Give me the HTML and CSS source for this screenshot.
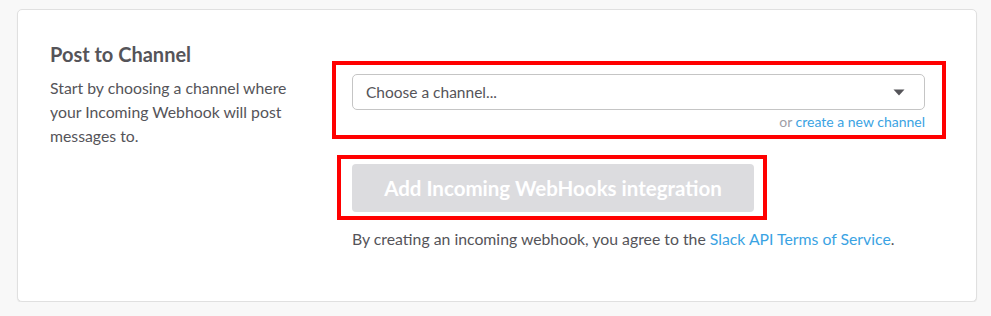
FILE: index.html
```html
<!DOCTYPE html>
<html lang="en">
<head>
  <meta charset="UTF-8" />
  <title>Incoming WebHooks</title>
  <link rel="stylesheet" href="styles.css">
</head>
<body>
  <div class="card">
    <div class="intro">
      <h2>Post to Channel</h2>
      <p>Start by choosing a channel where your Incoming Webhook will post messages to.</p>
    </div>

    <div class="settings">
      <div class="highlight channel-box">
        <div class="select">
          <span>Choose a channel...</span>
          <svg class="caret" width="12" height="7" viewBox="0 0 12 7"><path d="M0.5 0.5h11L6 6.5z" fill="#555459"/></svg>
        </div>
        <div class="new-channel">or <a href="#">create a new channel</a></div>
      </div>

      <div class="highlight button-box">
        <button type="button" class="add-btn" disabled>Add Incoming WebHooks integration</button>
      </div>

      <p class="terms">By creating an incoming webhook, you agree to the <a href="#">Slack API Terms of Service</a>.</p>
    </div>
  </div>
</body>
</html>
```

FILE: styles.css
```css
body {
  font-family: 'Lato', 'Liberation Sans', sans-serif;
  background-color: #f8f8f8;
  margin: 0;
  padding: 9px 14px 0 17px;
  color: #555459;
}
a {
  color: #3aa3e3;
  text-decoration: none;
}
.card {
  display: flex;
  gap: 32px;
  background-color: white;
  border: 1px solid #e0e0e0;
  border-radius: 5px;
  box-shadow: 0 1px 1px rgba(0, 0, 0, 0.08);
  padding: 32px 30px 52px 32px;
  height: 293px;
  box-sizing: border-box;
}
.intro {
  width: 250px;
  flex-shrink: 0;
}
h2 {
  margin: 0;
  font-size: 20px;
  line-height: 24px;
  font-weight: 700;
}
.intro p {
  margin: 10px 0 0;
  font-size: 15.8px;
  line-height: 24px;
}
.settings {
  flex: 1;
  margin-top: 19px;
}
.highlight {
  border: 4px solid #ff0000;
}
.channel-box {
  padding: 9px 17px 4px 16px;
}
.select {
  display: flex;
  align-items: center;
  justify-content: space-between;
  height: 36px;
  box-sizing: border-box;
  border: 1px solid #c5c5c5;
  border-radius: 5px;
  padding: 0 19px 0 13px;
  font-size: 15.5px;
}
.new-channel {
  margin-top: 3px;
  text-align: right;
  font-size: 14px;
  line-height: 18px;
  color: #9e9ea6;
}
.button-box {
  display: inline-block;
  margin: 16px 0 0 5px;
  padding: 5px 9px 4px 11px;
}
.add-btn {
  display: block;
  width: 402px;
  height: 48px;
  border: none;
  border-radius: 4px;
  background-color: #dcdcdf;
  color: white;
  font-family: inherit;
  font-size: 20.5px;
  font-weight: 700;
}
.terms {
  margin: 9px 0 0 20px;
  font-size: 15.8px;
  line-height: 20px;
}
```
